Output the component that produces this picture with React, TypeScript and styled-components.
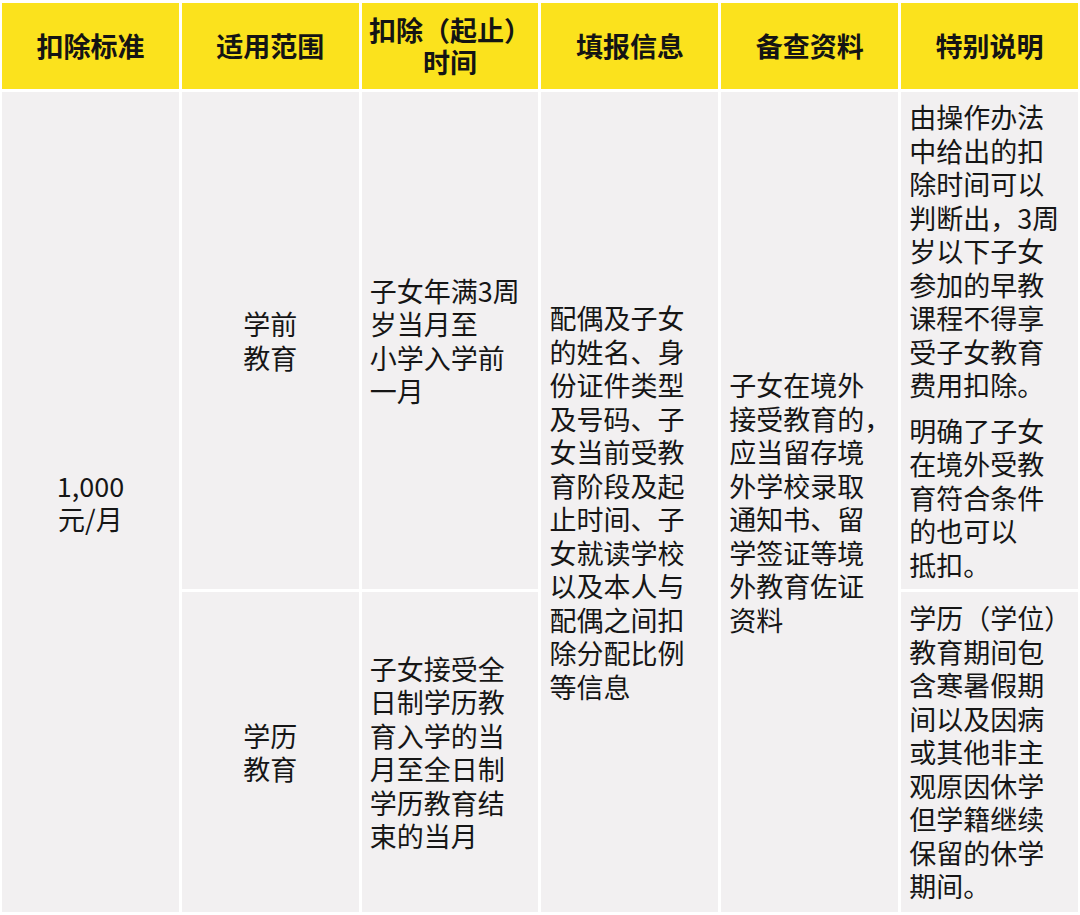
import styled, { createGlobalStyle } from 'styled-components';

const GlobalStyle = createGlobalStyle`
  html, body {
    margin: 0;
    padding: 0;
    background: #ffffff;
  }
  body {
    font-family: "Noto Sans CJK SC", "Noto Sans", sans-serif;
  }
`;

const Table = styled.div`
  width: 1080px;
  height: 915px;
  box-sizing: border-box;
  padding: 3px 2px;
  display: grid;
  grid-template-columns: repeat(6, 1fr);
  grid-template-rows: 86px 497px 320px;
  gap: 3px;
  background: #ffffff;
`;

const HeadCell = styled.div`
  background: #fbe21d;
  display: flex;
  flex-direction: column;
  align-items: center;
  justify-content: center;
  text-align: center;
  font-weight: 700;
  font-size: 27px;
  line-height: 32px;
  color: #141414;
`;

const Cell = styled.div<{ $row: string; $col: number; $center?: boolean }>`
  grid-row: ${(p) => p.$row};
  grid-column: ${(p) => p.$col};
  background: #f2f0f1;
  display: flex;
  flex-direction: column;
  justify-content: center;
  align-items: ${(p) => (p.$center ? 'center' : 'flex-start')};
  padding: 0 0 0 ${(p) => (p.$center ? 0 : 8)}px;
  font-size: 27px;
  line-height: 33.5px;
  color: #161616;
  white-space: nowrap;
`;

const Para = styled.div<{ $center?: boolean }>`
  text-align: ${(p) => (p.$center ? 'center' : 'left')};
  & + & {
    margin-top: 12px;
  }
`;

const Line = styled.div`
  height: 33.5px;
`;

const HeadLine = styled.div`
  height: 32px;
`;

const HEADERS: string[][] = [
  ['扣除标准'],
  ['适用范围'],
  ['扣除（起止）', '时间'],
  ['填报信息'],
  ['备查资料'],
  ['特别说明'],
];

type CellConfig = {
  row: string;
  col: number;
  center?: boolean;
  paras: string[][];
};

const CELLS: CellConfig[] = [
  { row: '2 / 4', col: 1, center: true, paras: [['1,000', '元/月']] },
  { row: '2', col: 2, center: true, paras: [['学前', '教育']] },
  { row: '3', col: 2, center: true, paras: [['学历', '教育']] },
  { row: '2', col: 3, paras: [['子女年满3周', '岁当月至', '小学入学前', '一月']] },
  {
    row: '3',
    col: 3,
    paras: [['子女接受全', '日制学历教', '育入学的当', '月至全日制', '学历教育结', '束的当月']],
  },
  {
    row: '2 / 4',
    col: 4,
    paras: [[
      '配偶及子女', '的姓名、身', '份证件类型', '及号码、子', '女当前受教', '育阶段及起',
      '止时间、子', '女就读学校', '以及本人与', '配偶之间扣', '除分配比例', '等信息',
    ]],
  },
  {
    row: '2 / 4',
    col: 5,
    paras: [[
      '子女在境外', '接受教育的，', '应当留存境', '外学校录取', '通知书、留', '学签证等境',
      '外教育佐证', '资料',
    ]],
  },
  {
    row: '2',
    col: 6,
    paras: [
      [
        '由操作办法', '中给出的扣', '除时间可以', '判断出，3周', '岁以下子女', '参加的早教',
        '课程不得享', '受子女教育', '费用扣除。',
      ],
      ['明确了子女', '在境外受教', '育符合条件', '的也可以', '抵扣。'],
    ],
  },
  {
    row: '3',
    col: 6,
    paras: [[
      '学历（学位）', '教育期间包', '含寒暑假期', '间以及因病', '或其他非主', '观原因休学',
      '但学籍继续', '保留的休学', '期间。',
    ]],
  },
];

const App = () => {
  return (
    <>
      <GlobalStyle />
      <Table>
        {HEADERS.map((lines, i) => (
          <HeadCell key={`head-${i}`}>
            {lines.map((line, k) => (
              <HeadLine key={`hl-${k}`}>{line}</HeadLine>
            ))}
          </HeadCell>
        ))}
        {CELLS.map((cell, i) => (
          <Cell key={`cell-${i}`} $row={cell.row} $col={cell.col} $center={cell.center}>
            {cell.paras.map((lines, j) => (
              <Para key={`para-${j}`} $center={cell.center && cell.col === 1}>
                {lines.map((line, k) => (
                  <Line key={`line-${k}`}>{line}</Line>
                ))}
              </Para>
            ))}
          </Cell>
        ))}
      </Table>
    </>
  );
};

export default App;
